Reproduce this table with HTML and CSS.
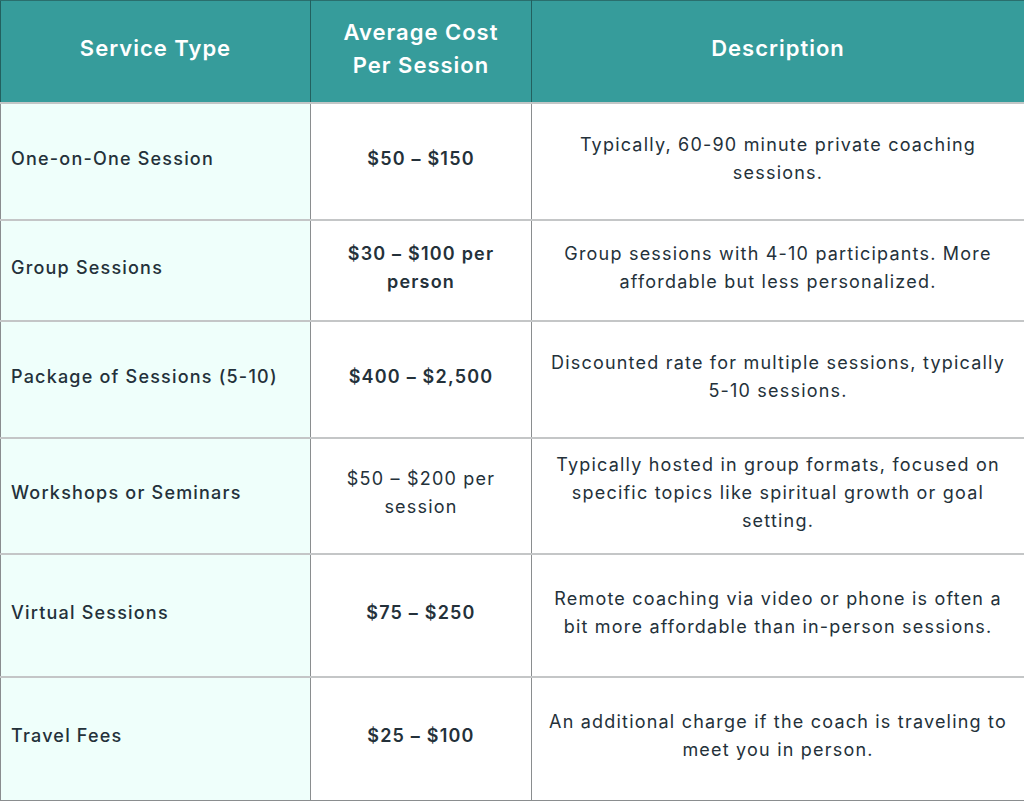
FILE: index.html
```html
<!DOCTYPE html>
<html lang="en">
<head>
<meta charset="utf-8">
<title>Coaching Costs</title>
<link rel="stylesheet" href="styles.css">
</head>
<body>
<table class="cost-table">
  <colgroup>
    <col class="col-type">
    <col class="col-cost">
    <col class="col-desc">
  </colgroup>
  <thead>
    <tr class="head-row">
      <th>Service Type</th>
      <th>Average Cost<br>Per Session</th>
      <th>Description</th>
    </tr>
  </thead>
  <tbody>
    <tr class="r1">
      <td class="type">One-on-One Session</td>
      <td class="cost">$50 – $150</td>
      <td class="desc">Typically, 60-90 minute private coaching sessions.</td>
    </tr>
    <tr class="r2">
      <td class="type">Group Sessions</td>
      <td class="cost">$30 – $100 per person</td>
      <td class="desc">Group sessions with 4-10 participants. More affordable but less personalized.</td>
    </tr>
    <tr class="r3">
      <td class="type">Package of Sessions (5-10)</td>
      <td class="cost">$400 – $2,500</td>
      <td class="desc">Discounted rate for multiple sessions, typically 5-10 sessions.</td>
    </tr>
    <tr class="r4">
      <td class="type">Workshops or Seminars</td>
      <td class="cost regular">$50 – $200 per session</td>
      <td class="desc">Typically hosted in group formats, focused on specific topics like spiritual growth or goal setting.</td>
    </tr>
    <tr class="r5">
      <td class="type">Virtual Sessions</td>
      <td class="cost">$75 – $250</td>
      <td class="desc">Remote coaching via video or phone is often a bit more affordable than in-person sessions.</td>
    </tr>
    <tr class="r6">
      <td class="type">Travel Fees</td>
      <td class="cost">$25 – $100</td>
      <td class="desc">An additional charge if the coach is traveling to meet you in person.</td>
    </tr>
  </tbody>
</table>
</body>
</html>
```

FILE: styles.css
```css
html, body {
  margin: 0;
  padding: 0;
  background: #ffffff;
}

body {
  font-family: "Inter", "Open Sans", "Liberation Sans", sans-serif;
  color: #24313a;
}

.cost-table {
  width: 1024px;
  border-collapse: collapse;
  table-layout: fixed;
}

.col-type { width: 310px; }
.col-cost { width: 221px; }
.col-desc { width: 493px; }

.head-row th {
  background: #369c9b;
  color: #ffffff;
  font-size: 22px;
  font-weight: 600;
  letter-spacing: 1px;
  line-height: 33px;
  text-align: center;
  height: 95px;
  padding: 0 8px 6px;
  border-top: 1px solid #2a6e6d;
  border-left: 1px solid #22605f;
  border-right: 1px solid #22605f;
  border-bottom: 2px solid #c2c6c6;
}

td {
  font-size: 18px;
  letter-spacing: 1.2px;
  line-height: 28px;
  padding: 0 10px 6px;
  vertical-align: middle;
  border-left: 1px solid #8a8d8f;
  border-right: 1px solid #8a8d8f;
  border-bottom: 2px solid #c4c6c7;
}

tbody tr:last-child td {
  border-bottom: 1px solid #8a8d8f;
}

.type {
  background: #effffb;
  font-weight: 500;
  text-align: left;
}

.cost {
  font-weight: 600;
  text-align: center;
  padding-left: 20px;
  padding-right: 20px;
}

.cost.regular {
  font-weight: 400;
}

.desc {
  font-weight: 400;
  text-align: center;
  padding-left: 10px;
  padding-right: 10px;
}

.r1 td { height: 109px; }
.r2 td { height: 93px; }
.r3 td { height: 109px; }
.r4 td { height: 108px; }
.r5 td { height: 115px; }
.r6 td { height: 116px; }
```
